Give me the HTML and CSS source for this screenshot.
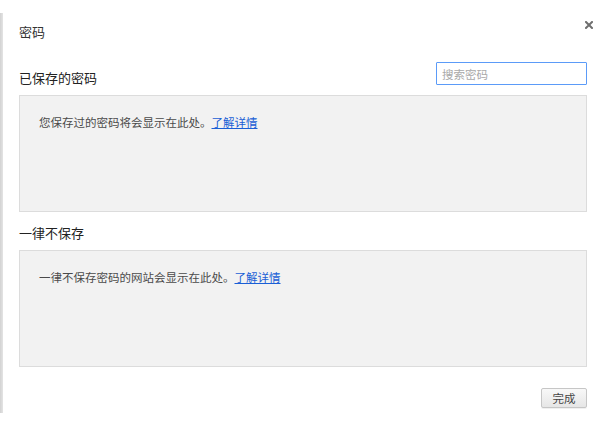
FILE: index.html
```html
<!DOCTYPE html>
<html lang="zh-CN">
<head>
<meta charset="utf-8">
<title>密码</title>
<link rel="stylesheet" href="styles.css">
</head>
<body>
<div class="page">
  <div class="strip"></div>
  <div class="dialog">
    <div class="title-row">
      <h1 class="title">密码</h1>
      <button class="close" aria-label="关闭">
        <svg width="8" height="8" viewBox="0 0 8 8"><path d="M1 1L7 7M7 1L1 7" stroke="#6f6f6f" stroke-width="2" stroke-linecap="square"/></svg>
      </button>
    </div>
    <div class="section-head">
      <h2 class="heading">已保存的密码</h2>
      <input class="search" type="text" placeholder="搜索密码">
    </div>
    <div class="box">
      <p class="box-text">您保存过的密码将会显示在此处。<a href="#" class="link">了解详情</a></p>
    </div>
    <div class="section-head second">
      <h2 class="heading">一律不保存</h2>
    </div>
    <div class="box">
      <p class="box-text">一律不保存密码的网站会显示在此处。<a href="#" class="link">了解详情</a></p>
    </div>
    <div class="footer">
      <button class="done">完成</button>
    </div>
  </div>
</div>
</body>
</html>
```
FILE: styles.css
```css
html, body {
  margin: 0;
  padding: 0;
  background: #ffffff;
}
body {
  font-family: "Noto Sans CJK SC", "Noto Sans", sans-serif;
  color: #333;
}
.page {
  display: flex;
  align-items: flex-start;
  width: 605px;
  height: 424px;
  overflow: hidden;
}
.strip {
  width: 3px;
  height: 400px;
  margin-top: 13px;
  background: linear-gradient(to right, #d2d2d2, #e4e4e4);
  flex: none;
}
.dialog {
  flex: 1;
  padding: 0 18px 0 16px;
}
.title-row {
  display: flex;
  justify-content: space-between;
  align-items: flex-start;
  height: 62px;
}
.title {
  margin: 22px 0 0;
  font-size: 13px;
  line-height: 20px;
  font-weight: normal;
  color: #333;
}
.close {
  margin: 21px -6px 0 0;
  padding: 0;
  width: 8px;
  height: 8px;
  border: 0;
  background: none;
  display: flex;
}
.section-head {
  display: flex;
  justify-content: space-between;
  align-items: flex-start;
  height: 33px;
}
.heading {
  margin: 7px 0 0;
  font-size: 13px;
  line-height: 18px;
  font-weight: normal;
  color: #222;
}
.search {
  box-sizing: border-box;
  width: 151px;
  height: 23px;
  margin: 0;
  padding: 0 5px;
  border: 1px solid #5b9bf8;
  border-radius: 1px;
  font-family: inherit;
  font-size: 11.5px;
  color: #333;
  outline: none;
}
.search::placeholder {
  color: #a9a9a9;
}
.box {
  box-sizing: border-box;
  height: 117px;
  background: #f2f2f2;
  border: 1px solid #dcdcdc;
  padding: 18px 19px;
}
.box-text {
  margin: 0;
  font-size: 11.5px;
  line-height: 16px;
  color: #4a4a4a;
}
.link {
  color: #1a5fd6;
  text-decoration: underline;
}
.section-head.second {
  height: 38px;
}
.second .heading {
  margin-top: 12px;
}
.footer {
  display: flex;
  justify-content: flex-end;
  margin-top: 21px;
}
.done {
  box-sizing: border-box;
  width: 46px;
  height: 20px;
  padding: 0;
  border: 1px solid #c6c6c6;
  border-radius: 2px;
  background: linear-gradient(#f8f8f8, #e6e6e6);
  box-shadow: 0 1px 0 rgba(0,0,0,0.06);
  font-family: inherit;
  font-size: 11.5px;
  line-height: 18px;
  color: #444;
}
```
